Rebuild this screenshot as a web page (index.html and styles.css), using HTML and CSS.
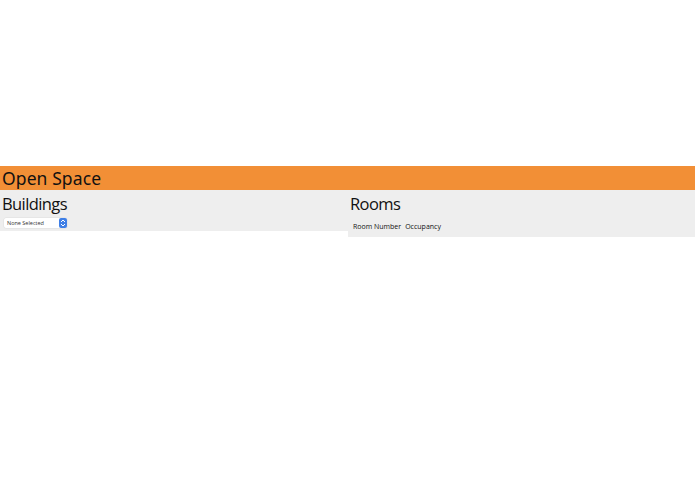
FILE: index.html
```
<!DOCTYPE html>
<html>
<head>
<meta charset="utf-8">
<link rel="stylesheet" href="styles.css">
</head>
<body>
<div class="spacer"></div>
<header class="topbar"><h1 class="brand">Open Space</h1></header>
<main class="cols">
  <section class="panel left">
    <h2 class="heading">Buildings</h2>
    <div class="select"><span class="sel-text">None Selected</span><span class="sel-arrow"><svg width="6" height="8" viewBox="0 0 6 8"><path d="M1 3 L3 1 L5 3 M1 5 L3 7 L5 5" fill="none" stroke="#fff" stroke-width="1"/></svg></span></div>
  </section>
  <section class="panel right">
    <h2 class="heading">Rooms</h2>
    <table class="rooms"><thead><tr><th>Room Number</th><th>Occupancy</th></tr></thead></table>
  </section>
</main>
</body>
</html>
```
FILE: styles.css
```
html, body { margin: 0; padding: 0; background: #fff; }
body { width: 695px; font-family: "Open Sans", "Noto Sans", sans-serif; color: #111; }
.spacer { height: 166px; }
.topbar { height: 24px; background: #f28f36; display: flex; align-items: center; }
.brand { margin: 0; padding-left: 2px; font-family: "Noto Sans", sans-serif; font-weight: 400; font-size: 17.5px; line-height: 24px; letter-spacing: 0.1px; color: #111; }
.cols { display: flex; align-items: flex-start; }
.panel { background: #eeeeee; box-sizing: border-box; }
.left { width: 348px; height: 41px; padding: 3px 0 0 2px; }
.right { width: 347px; height: 47px; padding: 3px 0 0 2px; }
.heading { margin: 0; font-weight: 400; font-size: 16.5px; line-height: 22px; letter-spacing: -0.6px; }
.select { margin: 3px 0 0 2px; width: 63px; height: 10px; background: #fff; border-radius: 2px; display: flex; align-items: center; justify-content: space-between; box-shadow: 0 0 0 0.5px #ddd; }
.sel-text { font-size: 5.5px; padding-left: 3px; color: #333; line-height: 10px; }
.sel-arrow { width: 8px; height: 10px; background: #3f7fe6; border-radius: 2px; display: flex; align-items: center; justify-content: center; }
.rooms { border-collapse: collapse; margin: 7px 0 0 1px; }
.rooms th { font-weight: 400; font-size: 7px; padding: 0 2px; text-align: left; line-height: 10px; }
```
